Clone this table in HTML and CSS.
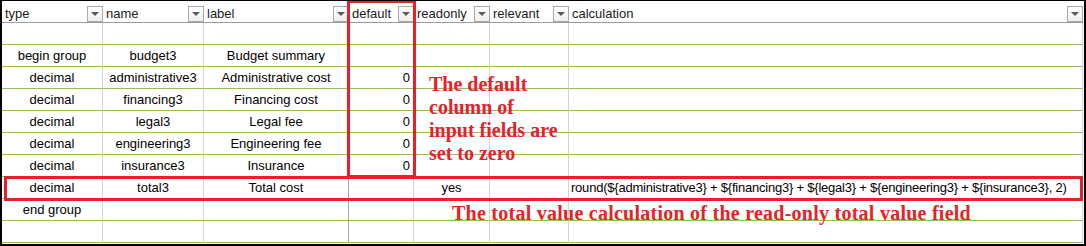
FILE: index.html
```html
<!DOCTYPE html>
<html lang="en">
<head>
<meta charset="utf-8">
<title>Budget survey sheet</title>
<link rel="stylesheet" href="styles.css">
</head>
<body>
<div class="sheet">
  <div class="grid">
    <div class="hd"><span>type</span><i class="dd"></i></div>
    <div class="hd"><span>name</span><i class="dd"></i></div>
    <div class="hd"><span>label</span><i class="dd"></i></div>
    <div class="hd"><span>default</span><i class="dd"></i></div>
    <div class="hd"><span>readonly</span><i class="dd"></i></div>
    <div class="hd"><span>relevant</span><i class="dd"></i></div>
    <div class="hd"><span>calculation</span><i class="dd"></i></div>

    <div class="c"></div><div class="c"></div><div class="c lbl"></div><div class="c"></div><div class="c"></div><div class="c"></div><div class="c"></div>

    <div class="c mid">begin group</div><div class="c mid">budget3</div><div class="c mid lbl">Budget summary</div><div class="c"></div><div class="c"></div><div class="c"></div><div class="c"></div>

    <div class="c mid">decimal</div><div class="c mid">administrative3</div><div class="c mid lbl">Administrative cost</div><div class="c num">0</div><div class="c"></div><div class="c"></div><div class="c"></div>

    <div class="c mid">decimal</div><div class="c mid">financing3</div><div class="c mid lbl">Financing cost</div><div class="c num">0</div><div class="c"></div><div class="c"></div><div class="c"></div>

    <div class="c mid">decimal</div><div class="c mid">legal3</div><div class="c mid lbl">Legal fee</div><div class="c num">0</div><div class="c"></div><div class="c"></div><div class="c"></div>

    <div class="c mid">decimal</div><div class="c mid">engineering3</div><div class="c mid lbl">Engineering fee</div><div class="c num">0</div><div class="c"></div><div class="c"></div><div class="c"></div>

    <div class="c mid">decimal</div><div class="c mid">insurance3</div><div class="c mid lbl">Insurance</div><div class="c num">0</div><div class="c"></div><div class="c"></div><div class="c"></div>

    <div class="c mid">decimal</div><div class="c mid">total3</div><div class="c mid lbl">Total cost</div><div class="c"></div><div class="c mid">yes</div><div class="c"></div><div class="c left formula">round(${administrative3} + ${financing3} + ${legal3} + ${engineering3} + ${insurance3}, 2)</div>

    <div class="c mid">end group</div><div class="c"></div><div class="c lbl"></div><div class="c"></div><div class="c"></div><div class="c"></div><div class="c"></div>

    <div class="c"></div><div class="c"></div><div class="c lbl"></div><div class="c"></div><div class="c"></div><div class="c"></div><div class="c"></div>
  </div>

  <div class="frame frame-default"></div>
  <div class="frame frame-total"></div>

  <p class="note note-default">The default<br>column of<br>input fields are<br>set to zero</p>
  <p class="note note-total">The total value calculation of the read-only total value field</p>
</div>
</body>
</html>
```

FILE: styles.css
```css
html, body {
  margin: 0;
  padding: 0;
  background: #fff;
}

.sheet {
  position: relative;
  box-sizing: border-box;
  width: 1086px;
  height: 246px;
  border: 2px solid #000;
  border-top-width: 1px;
  background: #fff;
  overflow: hidden;
  font-family: "Liberation Sans", Arial, sans-serif;
  font-size: 13px;
  color: #000;
}

.grid {
  display: grid;
  width: 1081px;
  grid-template-columns: 101px 101px 145px 65px 76px 79px 1fr;
  grid-auto-rows: 22px;
}

/* header cells with filter buttons */
.hd {
  box-sizing: border-box;
  display: flex;
  align-items: flex-end;
  justify-content: space-between;
  padding-left: 3px;
  border-bottom: 1px solid #9c9c9c;
  line-height: 15px;
  color: #1a1a1a;
}

.hd span {
  padding-bottom: 1px;
}

.dd {
  position: relative;
  box-sizing: border-box;
  flex: none;
  width: 16px;
  height: 16px;
  border: 1px solid #a9a9a9;
  background: linear-gradient(#ffffff, #eeeeee);
}

.dd::after {
  content: "";
  position: absolute;
  left: 3px;
  top: 5px;
  border-left: 4px solid transparent;
  border-right: 4px solid transparent;
  border-top: 4px solid #5a5a5a;
}

/* body cells */
.c {
  box-sizing: border-box;
  display: flex;
  align-items: center;
  border-right: 1px solid #d4d4d4;
  border-bottom: 1px solid #9bbb59;
  line-height: 15px;
  white-space: nowrap;
}

.c.lbl {
  border-right-color: #a6a6a6;
}

.mid {
  justify-content: center;
}

.num {
  justify-content: flex-end;
  padding-right: 3px;
}

.left {
  padding-left: 2px;
}

.formula {
  letter-spacing: -0.22px;
}

/* red highlight frames */
.frame {
  position: absolute;
  box-sizing: border-box;
  border: 3px solid #e8202a;
}

.frame-default {
  left: 345px;
  top: -1px;
  width: 69px;
  height: 178px;
}

.frame-total {
  left: 2px;
  top: 175px;
  width: 1079px;
  height: 25px;
}

/* callout notes */
.note {
  position: absolute;
  margin: 0;
  font-family: "Liberation Serif", "Times New Roman", serif;
  font-weight: bold;
  font-size: 20px;
  line-height: 23px;
  color: #e8202a;
  white-space: nowrap;
}

.note-default {
  left: 427px;
  top: 72px;
}

.note-total {
  left: 450px;
  top: 201px;
  letter-spacing: 0.25px;
}
```
